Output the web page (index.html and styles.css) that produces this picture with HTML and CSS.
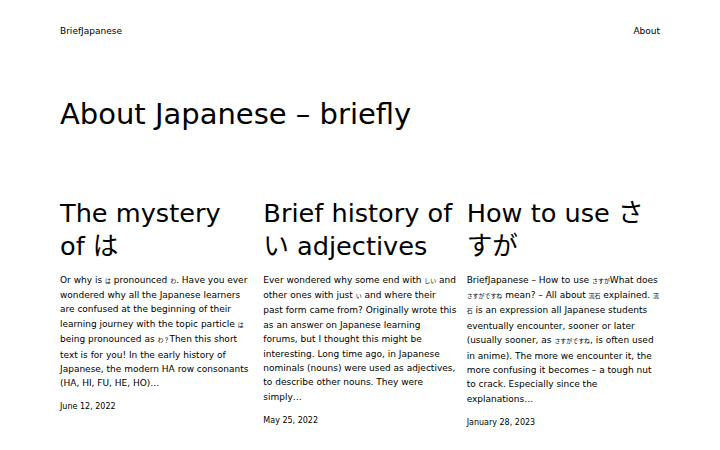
FILE: index.html
```html
<!DOCTYPE html>
<html lang="en">
<head>
<meta charset="utf-8">
<title>BriefJapanese</title>
<link rel="stylesheet" href="styles.css">
</head>
<body>
<div class="page">
  <header class="header">
    <a class="brand" href="#">BriefJapanese</a>
    <nav class="nav"><a href="#">About</a></nav>
  </header>
  <h1 class="hero">About Japanese – briefly</h1>
  <main class="posts">
    <article class="post">
      <h2 class="post-title">The mystery of <span lang="ja">は</span></h2>
      <p class="excerpt">Or why is <span class="ja" lang="ja">は</span> pronounced <span class="ja" lang="ja">わ</span>. Have you ever wondered why all the Japanese learners are confused at the beginning of their learning journey with the topic particle <span class="ja" lang="ja">は</span> being pronounced as <span class="ja" lang="ja">わ？</span>Then this short text is for you! In the early history of Japanese, the modern HA row consonants (HA, HI, FU, HE, HO)…</p>
      <div class="date">June 12, 2022</div>
    </article>
    <article class="post">
      <h2 class="post-title">Brief history of <span lang="ja">い</span> adjectives</h2>
      <p class="excerpt">Ever wondered why some end with <span class="ja" lang="ja">しい</span> and other ones with just <span class="ja" lang="ja">い</span> and where their past form came from? Originally wrote this as an answer on Japanese learning forums, but I thought this might be interesting. Long time ago, in Japanese nominals (nouns) were used as adjectives, to describe other nouns. They were simply…</p>
      <div class="date">May 25, 2022</div>
    </article>
    <article class="post">
      <h2 class="post-title">How to use <span lang="ja">さすが</span></h2>
      <p class="excerpt">BriefJapanese – How to use <span class="ja" lang="ja">さすが</span>What does <span class="ja" lang="ja">さすがですね</span> mean? – All about <span class="ja" lang="ja">流石</span> explained. <span class="ja" lang="ja">流石</span> is an expression all Japanese students eventually encounter, sooner or later (usually sooner, as <span class="ja" lang="ja">さすがですね</span>, is often used in anime). The more we encounter it, the more confusing it becomes – a tough nut to crack. Especially since the explanations…</p>
      <div class="date">January 28, 2023</div>
    </article>
  </main>
</div>
</body>
</html>
```

FILE: styles.css
```css
body {
  margin: 0;
  background: #ffffff;
  color: #000000;
  font-family: "DejaVu Sans", "Noto Sans CJK JP", sans-serif;
}

a {
  color: inherit;
  text-decoration: none;
}

.page {
  width: 600px;
  margin: 0 auto;
}

.header {
  display: flex;
  justify-content: space-between;
  align-items: center;
  height: 62px;
  font-size: 9px;
  line-height: 14px;
}

.hero {
  margin: 35px 0 0;
  font-size: 29px;
  font-weight: 400;
  line-height: 35px;
}

.posts {
  display: grid;
  grid-template-columns: repeat(3, 1fr);
  column-gap: 10px;
  margin-top: 65px;
}

.post-title {
  margin: 0;
  font-size: 25.6px;
  font-weight: 400;
  line-height: 32.5px;
}

.excerpt {
  margin: 10.5px 0 0;
  font-size: 9px;
  line-height: 14.4px;
}

.excerpt .ja {
  font-size: 0.66em;
}

.date {
  margin-top: 10.5px;
  font-size: 8px;
  line-height: 12px;
}
```
